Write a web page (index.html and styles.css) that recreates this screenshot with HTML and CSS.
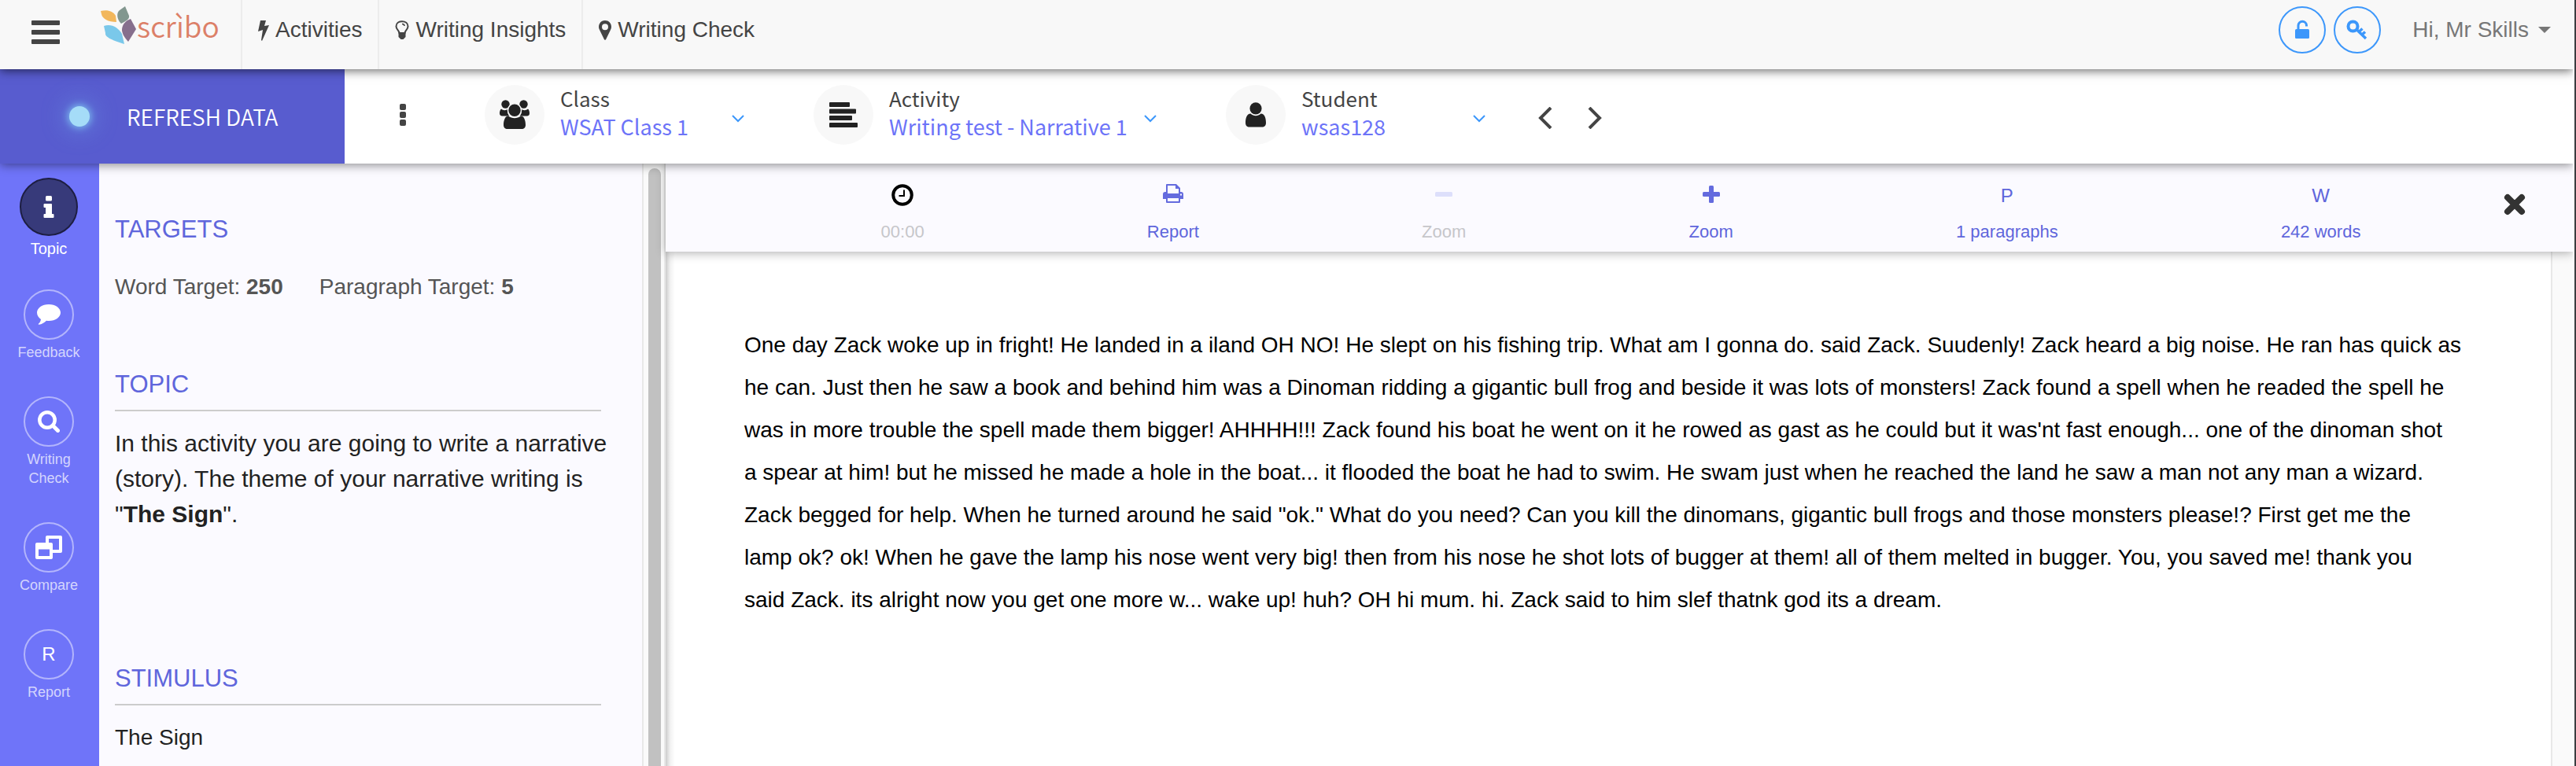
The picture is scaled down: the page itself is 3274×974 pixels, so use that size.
FILE: index.html
```html
<!DOCTYPE html>
<html lang="en">
<head>
<meta charset="utf-8">
<title>Scribo</title>
<link rel="stylesheet" href="styles.css">
</head>
<body>
<div class="app">
  <header class="topbar">
    <button class="menu-btn" aria-label="Menu"><span></span><span></span><span></span></button>
    <a class="logo" href="#" aria-label="Scribo home">
      <svg width="46" height="50" viewBox="0 0 46 50">
        <path fill="#f2b75c" d="M0 6C8 4 16 6 19 12L20 20C10 20 2 16 1 10Z"/>
        <path fill="#82978f" d="M31 0L36 12C37 17 31 19 26 22C20 16 20 8 24 5Z"/>
        <path fill="#7ac8ea" d="M4 25C14 22 22 27 27 35L30 48C18 44 5 40 6 34Z"/>
        <path fill="#866f8d" d="M38 16L45 29L35 45C30 40 27 34 27 30C27 23 32 18 38 16Z"/>
      </svg>
      <span class="logo-text">scrìbo</span>
    </a>
    <nav class="topnav">
      <a href="#"><svg width="14" height="26" viewBox="0 0 14 26"><path d="M3 0h7L8 7l6-1L5 26l-1-1 2-13-6 2Z"/></svg>Activities</a>
      <a href="#"><svg width="18" height="25" viewBox="0 0 18 25"><path fill="none" stroke="#444" stroke-width="2" d="M5.500 16C5 12.500 1.500 11.500 1.500 7.500C1.500 3.500 5 1.200 9 1.200S16.500 3.500 16.500 7.500C16.500 11.500 13 12.500 12.500 16Z"/><path d="M4.500 15h9v6l-3 3h-3l-3-3Z"/><path fill="none" stroke="#444" stroke-width="1.500" d="M9 4.500c2 0 3 1 3 2.500"/></svg>Writing Insights</a>
      <a href="#"><svg width="16" height="25" viewBox="0 0 16 25"><path fill-rule="evenodd" d="M8 0C3.500 0 0 3.400 0 8c0 2 .8 3.500 1.500 5L7 24.200q1 1.300 2 0L14.500 13C15.200 11.500 16 10 16 8c0-4.600-3.500-8-8-8Zm0 4.200a4 4 0 1 1 0 8 4 4 0 0 1 0-8Z"/></svg>Writing Check</a>
    </nav>
    <div class="account">
      <button class="round-btn" aria-label="Unlock"><svg width="20" height="26" viewBox="0 0 20 26"><rect x="1" y="12" width="18" height="12" rx="1.500"/><path fill="none" stroke="#3c97fb" stroke-width="3" d="M5 13V7.500a5 5 0 0 1 10.500 0V8.500"/></svg></button>
      <button class="round-btn" aria-label="Keys"><svg width="28" height="26" viewBox="0 0 28 26"><circle cx="8.500" cy="8.500" r="6" fill="none" stroke="#3c97fb" stroke-width="4"/><path fill="none" stroke="#3c97fb" stroke-width="3.500" d="M12.500 12L25 24M20 19l4-3.500M16.500 15l4-3.500"/></svg></button>
      <button class="user-btn">Hi, Mr Skills<svg width="16" height="8" viewBox="0 0 16 8"><path d="M0 0h16L8 8Z"/></svg></button>
    </div>
  </header>

  <section class="filterbar">
    <button class="refresh"><span class="pulse"></span>REFRESH DATA</button>
    <button class="more" aria-label="More options"><span></span><span></span><span></span></button>
    <div class="filters">
      <div class="filter">
        <span class="badge"><svg width="40" height="38" viewBox="0 0 40 38"><circle cx="8.500" cy="5.500" r="5.200"/><circle cx="31.500" cy="5.500" r="5.200"/><path d="M3 11.500c3 2.500 6 2 9 0c-1.500 4-.5 7 1.500 9h-9C2 20.500 1 19 1 17c0-2 .5-4.500 2-5.500ZM37 11.500c-3 2.500-6 2-9 0c1.500 4 .5 7-1.500 9h9c2.500 0 3.500-1.500 3.500-3.500c0-2-.5-4.500-2-5.500Z"/><circle cx="20" cy="13.200" r="8.500" stroke="#f8f8f8" stroke-width="1.500"/><path d="M12 20.500c5 3.500 11 3.500 16 0c4.500 0 6 6.500 6 11.500c0 3-2 5-5 5H11c-3 0-5-2-5-5c0-5 1.500-11.500 6-11.500Z"/></svg></span>
        <label for="class">Class</label>
        <select id="class"><option>WSAT Class 1</option></select>
        <svg class="chev" width="16" height="10" viewBox="0 0 16 10"><path d="M1 1l7 7 7-7"/></svg>
      </div>
      <div class="filter filter-wide">
        <span class="badge"><svg width="36" height="32" viewBox="0 0 36 32"><rect width="26" height="6" rx="1"/><rect y="8.500" width="34" height="6" rx="1"/><rect y="17" width="29" height="6" rx="1"/><rect y="26" width="36" height="6" rx="1"/></svg></span>
        <label for="activity">Activity</label>
        <select id="activity"><option>Writing test - Narrative 1</option></select>
        <svg class="chev" width="16" height="10" viewBox="0 0 16 10"><path d="M1 1l7 7 7-7"/></svg>
      </div>
      <div class="filter">
        <span class="badge"><svg width="26" height="32" viewBox="0 0 26 32"><circle cx="13" cy="7.800" r="7.600"/><path d="M6.500 14.500c4 3.500 9 3.500 13 0c5 0 6.500 6 6.500 11.500c0 4-2 5.500-5 5.500H5c-3 0-5-1.500-5-5.500c0-5.500 1.500-11.500 6.500-11.500Z"/></svg></span>
        <label for="student">Student</label>
        <select id="student"><option>wsas128</option></select>
        <svg class="chev" width="16" height="10" viewBox="0 0 16 10"><path d="M1 1l7 7 7-7"/></svg>
      </div>
    </div>
    <div class="pager">
      <button aria-label="Previous student"><svg width="18" height="28" viewBox="0 0 18 28"><path d="M16 1L3 14l13 13"/></svg></button>
      <button aria-label="Next student"><svg width="18" height="28" viewBox="0 0 18 28"><path d="M2 1l13 13L2 27"/></svg></button>
    </div>
  </section>

  <div class="workspace">
    <nav class="rail">
      <button class="rail-item active"><span class="disc"><svg width="14" height="28" viewBox="0 0 14 28"><rect x="3" width="8" height="6.500" rx="1.500"/><path d="M1.500 10H10q1 0 1 1v12h1.500q1 0 1 1v3q0 1-1 1h-11q-1 0-1-1v-3q0-1 1-1H3v-8H1.500q-1 0-1-1v-3q0-1 1-1Z"/></svg></span>Topic</button>
      <button class="rail-item"><span class="disc"><svg width="30" height="26" viewBox="0 0 30 26"><path d="M15 0c8.500 0 15 4.700 15 10.500S23.500 21 15 21c-1 0-2 0-3-.2C9.500 23 6 25.500 2.500 25.800c-1 0-1-.6-.4-1.200c1.600-1.600 2.500-3 2.900-5.600C2 17 0 14 0 10.500C0 4.700 6.500 0 15 0Z"/></svg></span>Feedback</button>
      <button class="rail-item"><span class="disc"><svg width="28" height="28" viewBox="0 0 28 28"><circle cx="12" cy="12" r="9.700" fill="none" stroke="#fff" stroke-width="4.500"/><path fill="none" stroke="#fff" stroke-width="5" stroke-linecap="round" d="M19.500 19.500l6 6"/></svg></span>Writing<br>Check</button>
      <button class="rail-item"><span class="disc"><svg width="34" height="30" viewBox="0 0 34 30"><path fill="none" stroke="#fff" stroke-width="4" stroke-linejoin="round" d="M15 10V2h17v18H20"/><path fill-rule="evenodd" d="M2 9h18q2 0 2 2v17q0 2-2 2H2q-2 0-2-2V11q0-2 2-2Zm2 8.500V26h14v-8.500Z"/></svg></span>Compare</button>
      <button class="rail-item"><span class="disc">R</span>Report</button>
    </nav>

    <aside class="brief">
      <section class="targets">
        <h2>TARGETS</h2>
        <p><span>Word Target: <b>250</b></span><span>Paragraph Target: <b>5</b></span></p>
      </section>
      <section class="topic">
        <h2 class="ruled">TOPIC</h2>
        <p>In this activity you are going to write a narrative (story). The theme of your narrative writing is "<b>The Sign</b>".</p>
      </section>
      <section class="stimulus">
        <h2 class="ruled">STIMULUS</h2>
        <p>The Sign</p>
      </section>
    </aside>
    <div class="scrollbar"><span class="thumb"></span></div>

    <main class="editor">
      <div class="toolbar">
        <div class="tools">
          <div class="tool muted"><svg width="28" height="28" viewBox="0 0 28 28"><circle cx="14" cy="14" r="11.800" fill="none" stroke="#000" stroke-width="4"/><path fill="none" stroke="#000" stroke-width="2" d="M16 7.500V15H9.500"/></svg><span>00:00</span></div>
          <button class="tool"><svg width="26" height="26" viewBox="0 0 26 26"><path fill-rule="evenodd" d="M4 10V1q0-1 1-1h12l5 5v5h1q3 0 3 3v6h-4v4q0 1-1 1H5q-1 0-1-1v-4H0v-6q0-3 3-3h1ZM6 2v10h14V6h-4V2ZM6 18v4h14v-4ZM22 12.500v2h2v-2Z"/></svg><span>Report</span></button>
          <button class="tool muted" disabled><svg width="22" height="26" viewBox="0 0 22 26"><rect y="10" width="22" height="6" rx="1.500" fill="#dddffb"/></svg><span>Zoom</span></button>
          <button class="tool"><svg width="22" height="26" viewBox="0 0 22 26"><rect y="10" width="22" height="6" rx="1.500"/><rect x="8" y="2" width="6" height="22" rx="1.500"/></svg><span>Zoom</span></button>
          <div class="tool"><span class="letter">P</span><span>1 paragraphs</span></div>
          <div class="tool"><span class="letter">W</span><span>242 words</span></div>
        </div>
        <button class="close" aria-label="Close"><svg width="28" height="28" viewBox="0 0 28 28"><path fill="none" stroke="#333" stroke-width="8" stroke-linecap="round" d="M5 5l18 18M23 5L5 23"/></svg></button>
      </div>
      <div class="document">
        <p class="essay">One day Zack woke up in fright! He landed in a iland OH NO! He slept on his fishing trip. What am I gonna do. said Zack. Suudenly! Zack heard a big noise. He ran has quick as<br>
        he can. Just then he saw a book and behind him was a Dinoman ridding a gigantic bull frog and beside it was lots of monsters! Zack found a spell when he readed the spell he<br>
        was in more trouble the spell made them bigger! AHHHH!!! Zack found his boat he went on it he rowed as gast as he could but it was'nt fast enough... one of the dinoman shot<br>
        a spear at him! but he missed he made a hole in the boat... it flooded the boat he had to swim. He swam just when he reached the land he saw a man not any man a wizard.<br>
        Zack begged for help. When he turned around he said "ok." What do you need? Can you kill the dinomans, gigantic bull frogs and those monsters please!? First get me the<br>
        lamp ok? ok! When he gave the lamp his nose went very big! then from his nose he shot lots of bugger at them! all of them melted in bugger. You, you saved me! thank you<br>
        said Zack. its alright now you get one more w... wake up! huh? OH hi mum. hi. Zack said to him slef thatnk god its a dream.</p>
        <div class="gutter"></div>
      </div>
    </main>
  </div>
</div>
</body>
</html>
```
FILE: styles.css
```css
* { box-sizing: border-box; }

body {
  margin: 0;
  background: #3c3d40;
  font-family: "Liberation Sans", Arial, sans-serif;
  font-size: 28px;
  color: #222;
}

h2, p { margin: 0; }
a { color: inherit; text-decoration: none; }
svg { display: block; flex: none; }

button {
  border: 0;
  padding: 0;
  background: none;
  font: inherit;
  color: inherit;
}

.app {
  display: flex;
  flex-direction: column;
  height: 100vh;
  margin-right: 2px;
  border-right: 2px solid #fff;
  background: #fff;
  overflow: hidden;
}

/* Top bar */
.topbar {
  position: relative;
  z-index: 3;
  display: flex;
  flex: none;
  height: 88px;
  background: #f8f8f8;
  box-shadow: 0 2px 12px rgba(0, 0, 0, .6);
  color: #444;
}
.menu-btn {
  display: flex;
  flex-direction: column;
  gap: 6px;
  width: 36px;
  margin: 26px 52px 0 40px;
}
.menu-btn span { height: 6px; border-radius: 1px; background: #444; }
.logo { display: flex; width: 178px; padding-top: 8px; }
.logo-text {
  font-family: "Noto Sans CJK SC", sans-serif;
  font-weight: 350;
  font-size: 37px;
  line-height: 48px;
  color: #dc8068;
}
.topnav { display: flex; }
.topnav a {
  display: flex;
  gap: 8px;
  padding: 0 20px;
  border-left: 2px solid #ececec;
  line-height: 76px;
}
.topnav svg { margin-top: 26px; fill: #444; }
.account {
  display: flex;
  gap: 10px;
  margin-left: auto;
  padding: 8px 28px 0 0;
}
.round-btn {
  display: grid;
  place-items: center;
  width: 60px;
  height: 60px;
  border: 2px solid #3c97fb;
  border-radius: 50%;
}
.round-btn svg { fill: #3c97fb; }
.user-btn {
  display: flex;
  align-items: center;
  gap: 12px;
  height: 60px;
  padding-left: 30px;
  color: #777;
}
.user-btn svg { fill: #777; }

/* Filter bar */
.filterbar {
  position: relative;
  z-index: 2;
  display: flex;
  flex: none;
  height: 120px;
  background: #fff;
  box-shadow: 0 2px 12px rgba(0, 0, 0, .45);
  font-family: "Noto Sans CJK SC", sans-serif;
}
.refresh {
  display: flex;
  align-items: center;
  gap: 47px;
  width: 438px;
  padding-left: 88px;
  background: #585ccf;
  color: #fff;
  font-weight: 350;
}
.pulse {
  width: 26px;
  height: 26px;
  border-radius: 50%;
  background: #a5dcf8;
  box-shadow: 0 0 8px 2px #79b4ec, 0 0 28px 8px rgba(110, 160, 230, .4);
}
.more {
  display: flex;
  flex-direction: column;
  gap: 2px;
  width: 8px;
  margin: 44px 100px 0 70px;
}
.more span { height: 8px; border-radius: 2px; background: #444; }
.filters { display: flex; gap: 88px; padding-top: 20px; }
.filter {
  display: grid;
  grid-template-columns: 76px 1fr 16px;
  grid-template-rows: 32px 44px;
  column-gap: 20px;
  width: 330px;
}
.filter-wide { width: 436px; }
.badge {
  grid-row: 1 / 3;
  display: grid;
  place-items: center;
  width: 76px;
  height: 76px;
  border-radius: 50%;
  background: #f8f8f8;
}
.badge svg { fill: #222; }
.filter label { grid-column: 2; font-size: 26px; line-height: 34px; color: #444; }
.filter select {
  grid-column: 2;
  grid-row: 2;
  appearance: none;
  height: 42px;
  border: 0;
  padding: 0;
  margin-right: -20px;
  background: none;
  font: 27px/42px "Noto Sans CJK SC", sans-serif;
  color: #6c73f8;
}
.chev {
  grid-column: 3;
  grid-row: 2;
  margin-top: 6px;
  fill: none;
  stroke: #3c97fb;
  stroke-width: 2;
}
.pager { display: flex; gap: 45px; padding: 48px 0 0 67px; }
.pager svg { fill: none; stroke: #444; stroke-width: 4; }
.pager button { height: 28px; }

/* Workspace */
.workspace { display: flex; flex: 1; min-height: 0; }

.rail {
  display: flex;
  flex: none;
  flex-direction: column;
  align-items: center;
  gap: 44px;
  width: 126px;
  padding: 18px 2px 0 0;
  background: #6f74f9;
}
.rail-item {
  display: flex;
  flex-direction: column;
  align-items: center;
  gap: 4px;
  font-size: 18px;
  line-height: 24px;
  color: #d4d5fd;
}
.disc {
  display: grid;
  place-items: center;
  width: 64px;
  height: 64px;
  border: 2px solid #b3b5fc;
  border-radius: 50%;
  font-size: 24px;
  color: #fff;
}
.disc svg { fill: #fff; }
.active { margin-bottom: -4px; font-size: 20px; color: #fff; }
.active .disc { width: 74px; height: 74px; border-color: #1d1e42; background: #373a7a; }

.brief {
  flex: none;
  width: 690px;
  padding: 64px 32px 0 20px;
  background: #fbfaff;
  line-height: 45px;
}
.brief h2 { font-weight: 400; font-size: 31px; line-height: 40px; color: #5f66dc; }
.brief .ruled { width: 618px; padding-bottom: 12px; border-bottom: 2px solid #ccc; }
.targets { height: 197px; }
.targets p { display: flex; gap: 46px; padding-top: 30px; color: #555; }
.topic { height: 374px; }
.topic p, .stimulus p { padding-top: 18px; }
.topic p { font-size: 30px; }

.scrollbar {
  flex: none;
  width: 30px;
  padding: 6px 4px 0 6px;
  border: solid #e8e8e8;
  border-width: 0 2px;
  background: #fafafa;
}
.thumb {
  display: block;
  width: 16px;
  height: 100%;
  border-radius: 8px 8px 0 0;
  background: #c1c1c1;
}

/* Editor */
.editor { display: flex; flex: 1; flex-direction: column; min-width: 0; }
.toolbar {
  position: relative;
  z-index: 1;
  display: flex;
  flex: none;
  height: 112px;
  background: #fbfaff;
  box-shadow: 0 2px 12px rgba(0, 0, 0, .3);
}
.tools {
  display: flex;
  flex: 1;
  justify-content: space-around;
  padding: 24px 0 0 132px;
}
.tool {
  display: flex;
  flex-direction: column;
  align-items: center;
  justify-content: space-between;
  height: 78px;
  font-size: 22px;
  line-height: 30px;
  color: #5f66dc;
}
.tool svg { margin-top: 2px; fill: #646bde; }
.tool .letter { font-size: 24px; line-height: 34px; }
.muted { color: #c6c6ca; }
.close { width: 128px; padding: 38px 0 0 40px; align-self: flex-start; }

.document {
  display: flex;
  flex: 1;
  background: linear-gradient(to right, rgba(0, 0, 0, .2), rgba(0, 0, 0, .05) 6px, transparent 12px);
}
.essay {
  flex: 1;
  padding: 92px 90px 0 100px;
  line-height: 54px;
  color: #000;
}
.gutter { width: 28px; border-left: 2px solid #e8e8e8; background: #fafafa; }
```
